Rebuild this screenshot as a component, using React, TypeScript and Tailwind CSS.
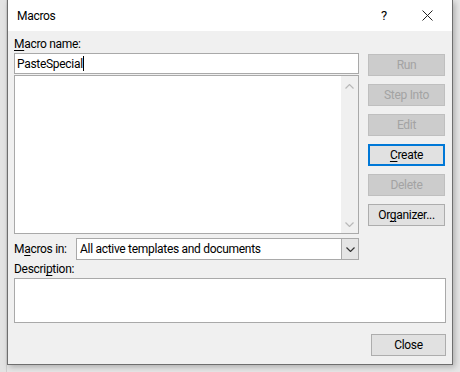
const FONT = { fontFamily: 'Roboto, "Noto Sans", sans-serif' };

function DisabledButton({ label }: { label: string }) {
  return (
    <div className="h-[22px] w-[77px] flex items-center justify-center border border-[#bfbfbf] bg-[#cccccc] text-[12px] text-[#a3a3a3]">
      {label}
    </div>
  );
}

function Button({
  children,
  focused = false,
  width = "w-[77px]",
}: {
  children: React.ReactNode;
  focused?: boolean;
  width?: string;
}) {
  return (
    <div
      className={`h-[22px] ${width} flex items-center justify-center bg-[#e1e1e1] text-[12px] text-black ${
        focused ? "border-2 border-[#0078d7]" : "border border-[#adadad]"
      }`}
    >
      {children}
    </div>
  );
}

function Chevron({ up = false, color = "#b9b9b9" }: { up?: boolean; color?: string }) {
  return (
    <svg width="9" height="5" viewBox="0 0 9 5" className="block">
      <path
        d={up ? "M0.5 4.5 L4.5 0.5 L8.5 4.5" : "M0.5 0.5 L4.5 4.5 L8.5 0.5"}
        fill="none"
        stroke={color}
        strokeWidth="1.2"
      />
    </svg>
  );
}

export default function App() {
  return (
    <div className="w-[460px] h-[372px] bg-[#e6e6e6] overflow-hidden tracking-[-0.3px]" style={FONT}>
      <div className="flex h-full">
        {/* desktop strip on the left */}
        <div className="w-[7px] h-full flex">
          <div className="w-[6px] bg-[#e3e3e3]" />
          <div className="w-px bg-[#cfcfcf]" />
        </div>

        <div className="w-[446px] h-[365px] flex flex-col border-x border-b border-[#6e6e6e] shadow-[2px_2px_6px_rgba(0,0,0,0.25)]">
          {/* title bar */}
          <div className="h-[31px] bg-white flex items-center text-[12px] text-black">
            <span className="pl-[9px] flex-1">Macros</span>
            <span className="w-[14px] text-center mr-[31px] text-[13px]">?</span>
            <svg width="11" height="11" viewBox="0 0 11 11" className="mr-[19px]">
              <path d="M0.5 0.5 L10.5 10.5 M10.5 0.5 L0.5 10.5" stroke="#222" strokeWidth="1" />
            </svg>
          </div>

          {/* body */}
          <div className="flex-1 bg-[#f0f0f0] px-[6px] text-[12px] text-black">
            <div className="flex gap-[9px]">
              <div className="w-[345px] flex flex-col">
                <div className="h-[22px] flex items-end pb-[3px] leading-none">
                  <span>
                    <span className="underline underline-offset-2">M</span>acro name:
                  </span>
                </div>
                <div className="h-[21px] bg-white border border-[#a9a9a9] flex items-center pl-[2px]">
                  <span>PasteSpecial</span>
                  <span className="w-px h-[15px] bg-black" />
                </div>
                <div className="mt-px h-[159px] bg-white border border-[#a9a9a9] flex">
                  <div className="flex-1" />
                  <div className="w-[17px] bg-[#f0f0f0] flex flex-col items-center justify-between pt-[8px] pb-[6px]">
                    <Chevron up />
                    <Chevron />
                  </div>
                </div>
              </div>

              <div className="flex flex-col gap-[8px] pt-[23px]">
                <DisabledButton label="Run" />
                <DisabledButton label="Step Into" />
                <DisabledButton label="Edit" />
                <Button focused>
                  <span>
                    <span className="underline underline-offset-2">C</span>reate
                  </span>
                </Button>
                <DisabledButton label="Delete" />
                <Button>
                  <span>
                    Or<span className="underline underline-offset-2">g</span>anizer...
                  </span>
                </Button>
              </div>
            </div>

            <div className="mt-[4px] w-[345px] flex items-center">
              <span className="w-[62px]">
                M<span className="underline underline-offset-2">a</span>cros in:
              </span>
              <div className="flex-1 h-[22px] bg-white border border-[#a9a9a9] flex">
                <span className="flex-1 pl-[3px] flex items-center">All active templates and documents</span>
                <div className="w-[17px] bg-[#e5e5e5] border-l border-[#a9a9a9] flex items-center justify-center">
                  <Chevron color="#333" />
                </div>
              </div>
            </div>

            <div className="h-[18px] flex items-end leading-none pb-[3px]">
              <span>
                Descri<span className="underline underline-offset-2">p</span>tion:
              </span>
            </div>
            <div className="h-[45px] bg-white border border-[#a9a9a9]" />

            <div className="flex justify-end mt-[11px]">
              <Button width="w-[75px]">Close</Button>
            </div>
          </div>
        </div>
      </div>
    </div>
  );
}
